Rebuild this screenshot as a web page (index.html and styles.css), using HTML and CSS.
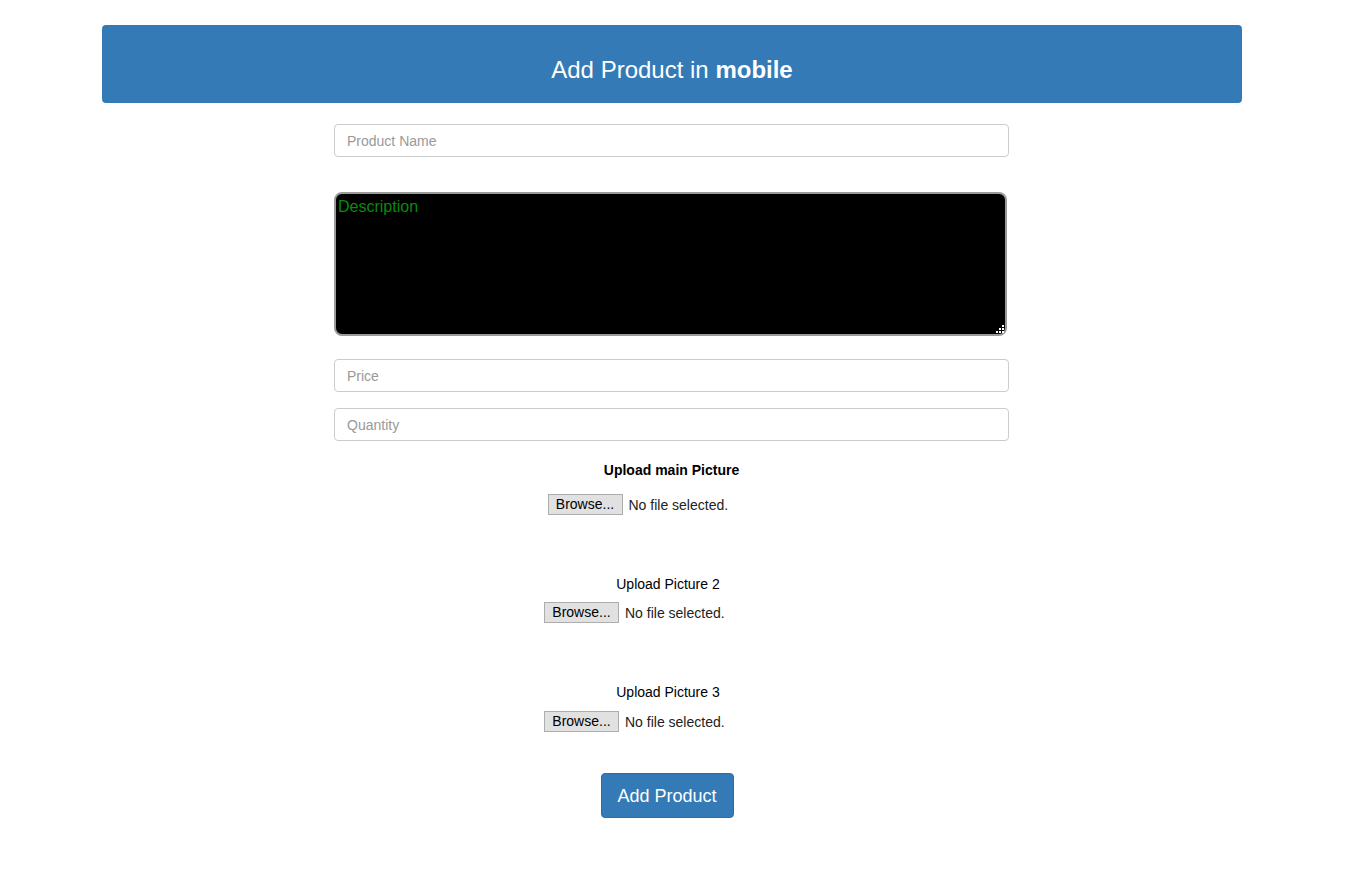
FILE: index.html
```html
<!DOCTYPE html>
<html>
<head>
<meta charset="utf-8">
<link rel="stylesheet" href="styles.css">
</head>
<body>
<div class="page">
  <div class="banner">Add Product in <b>mobile</b></div>
  <form class="form">
    <input class="field first" type="text" placeholder="Product Name">
    <div class="desc-wrap">
      <textarea class="desc">Description</textarea>
      <svg class="grip" width="8" height="8" viewBox="0 0 8 8">
        <rect x="6" y="0" width="2" height="2" fill="#fff"/>
        <rect x="3" y="3" width="2" height="2" fill="#fff"/>
        <rect x="6" y="3" width="2" height="2" fill="#fff"/>
        <rect x="0" y="6" width="2" height="2" fill="#fff"/>
        <rect x="3" y="6" width="2" height="2" fill="#fff"/>
        <rect x="6" y="6" width="2" height="2" fill="#fff"/>
      </svg>
    </div>
    <input class="field price" type="text" placeholder="Price">
    <input class="field qty" type="text" placeholder="Quantity">

    <div class="upload main">
      <div class="label bold">Upload main Picture</div>
      <div class="file-row"><span class="browse">Browse...</span><span class="nofile">No file selected.</span></div>
    </div>
    <div class="upload extra">
      <div class="label">Upload Picture 2</div>
      <div class="file-row"><span class="browse">Browse...</span><span class="nofile">No file selected.</span></div>
    </div>
    <div class="upload extra third">
      <div class="label">Upload Picture 3</div>
      <div class="file-row"><span class="browse">Browse...</span><span class="nofile">No file selected.</span></div>
    </div>
    <div class="actions"><button type="button" class="submit">Add Product</button></div>
  </form>
</div>
</body>
</html>
```

FILE: styles.css
```css
* { box-sizing: border-box; }
html, body { margin: 0; padding: 0; background: #fff; }
body {
  font-family: "Liberation Sans", Arial, sans-serif;
  font-size: 14px;
  color: #333;
}
.page {
  width: 1140px;
  margin-left: 102px;
  padding-top: 25px;
}
.banner {
  height: 78px;
  background: #337ab7;
  border-radius: 4px;
  color: #fff;
  font-size: 24px;
  line-height: 26px;
  text-align: center;
  padding-top: 32px;
}
.banner b { font-weight: bold; }
.form {
  display: flex;
  flex-direction: column;
  align-items: center;
  padding-right: 1px;
}
.field {
  display: block;
  width: 675px;
  height: 33px;
  border: 1px solid #ccc;
  border-radius: 4px;
  padding: 6px 12px;
  font-family: "Liberation Sans", Arial, sans-serif;
  font-size: 14px;
  color: #555;
  background: #fff;
  outline: none;
}
.field::placeholder { color: #999; }
.first { margin-top: 21px; }
.desc-wrap {
  position: relative;
  margin-top: 35px;
  width: 673px;
  height: 144px;
  margin-right: 2px;
}
.desc {
  display: block;
  width: 100%;
  height: 100%;
  background: #000;
  color: #0a8a0a;
  border: 2px solid #9a9a9a;
  border-radius: 8px;
  padding: 3px 2px;
  font-family: "Liberation Sans", Arial, sans-serif;
  font-size: 16px;
  line-height: 19px;
  resize: none;
  outline: none;
}
.grip {
  position: absolute;
  right: 3px;
  bottom: 3px;
}
.price { margin-top: 23px; }
.qty { margin-top: 16px; }
.upload {
  display: flex;
  flex-direction: column;
  align-items: center;
}
.upload.main { margin-top: 19px; }
.upload.extra { margin-top: 59px; padding-right: 7px; }
.label {
  color: #000;
  font-size: 14px;
  line-height: 20px;
}
.label.bold { font-weight: bold; }
.file-row {
  width: 248px;
  display: flex;
  align-items: center;
  height: 21px;
  color: #222;
}
.upload.main .file-row { margin-top: 14px; }
.upload.extra .file-row { margin-top: 8px; }
.upload.third .file-row { margin-top: 9px; }
.browse {
  display: inline-block;
  width: 75px;
  height: 21px;
  line-height: 19px;
  text-align: center;
  background: #e1e1e1;
  border: 1px solid #adadad;
  color: #000;
  font-size: 14px;
}
.nofile {
  margin-left: 6px;
  font-size: 14px;
  color: #222;
  padding-top: 1px;
}
.actions { margin-top: 41px; padding-right: 9px; }
.submit {
  width: 133px;
  height: 45px;
  background: #337ab7;
  border: 1px solid #2e6da4;
  border-radius: 4px;
  color: #fff;
  font-family: "Liberation Sans", Arial, sans-serif;
  font-size: 18px;
  padding: 2px 0 0;
  cursor: pointer;
}
```
